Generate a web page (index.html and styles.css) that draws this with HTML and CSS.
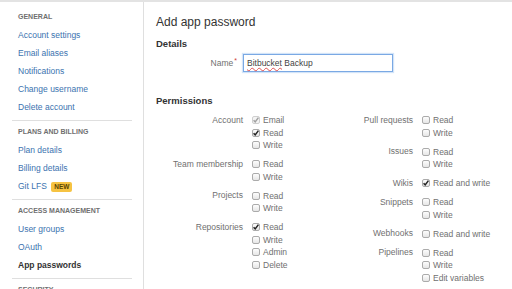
FILE: index.html
```html
<!DOCTYPE html>
<html>
<head>
    <title>Add app password</title>
    <link rel="stylesheet" href="styles.css">
</head>
<body>
<div class="page">
    <nav class="sidebar">
        <div class="nav-section">
            <h3 class="nav-heading">General</h3>
            <a class="nav-link" href="#">Account settings</a>
            <a class="nav-link" href="#">Email aliases</a>
            <a class="nav-link" href="#">Notifications</a>
            <a class="nav-link" href="#">Change username</a>
            <a class="nav-link" href="#">Delete account</a>
        </div>
        <div class="nav-section">
            <h3 class="nav-heading">Plans and billing</h3>
            <a class="nav-link" href="#">Plan details</a>
            <a class="nav-link" href="#">Billing details</a>
            <a class="nav-link" href="#">Git LFS <span class="badge">New</span></a>
        </div>
        <div class="nav-section">
            <h3 class="nav-heading">Access management</h3>
            <a class="nav-link" href="#">User groups</a>
            <a class="nav-link" href="#">OAuth</a>
            <a class="nav-link active" href="#">App passwords</a>
        </div>
        <div class="nav-section">
            <h3 class="nav-heading">Security</h3>
        </div>
    </nav>

    <main class="content">
        <h1 class="page-title">Add app password</h1>
        <h2 class="section-title">Details</h2>
        <div class="field-row">
            <label class="field-label">Name<span class="required">*</span></label>
            <div class="text-field"><span class="misspelled">Bitbucket</span> Backup</div>
        </div>

        <h2 class="section-title permissions-title">Permissions</h2>
        <div class="permissions">
            <div class="perm-column">
                <div class="perm-group">
                    <div class="perm-label">Account</div>
                    <div class="perm-options">
                        <div class="option"><span class="cb checked disabled"><svg viewBox="0 0 8 8"><path d="M1.6 4.2 L3.2 5.9 L6.4 1.6"/></svg></span>Email</div>
                        <div class="option"><span class="cb checked"><svg viewBox="0 0 8 8"><path d="M1.6 4.2 L3.2 5.9 L6.4 1.6"/></svg></span>Read</div>
                        <div class="option"><span class="cb"></span>Write</div>
                    </div>
                </div>
                <div class="perm-group">
                    <div class="perm-label">Team membership</div>
                    <div class="perm-options">
                        <div class="option"><span class="cb"></span>Read</div>
                        <div class="option"><span class="cb"></span>Write</div>
                    </div>
                </div>
                <div class="perm-group">
                    <div class="perm-label">Projects</div>
                    <div class="perm-options">
                        <div class="option"><span class="cb"></span>Read</div>
                        <div class="option"><span class="cb"></span>Write</div>
                    </div>
                </div>
                <div class="perm-group">
                    <div class="perm-label">Repositories</div>
                    <div class="perm-options">
                        <div class="option"><span class="cb checked"><svg viewBox="0 0 8 8"><path d="M1.6 4.2 L3.2 5.9 L6.4 1.6"/></svg></span>Read</div>
                        <div class="option"><span class="cb"></span>Write</div>
                        <div class="option"><span class="cb"></span>Admin</div>
                        <div class="option"><span class="cb"></span>Delete</div>
                    </div>
                </div>
            </div>

            <div class="perm-column">
                <div class="perm-group">
                    <div class="perm-label">Pull requests</div>
                    <div class="perm-options">
                        <div class="option"><span class="cb"></span>Read</div>
                        <div class="option"><span class="cb"></span>Write</div>
                    </div>
                </div>
                <div class="perm-group">
                    <div class="perm-label">Issues</div>
                    <div class="perm-options">
                        <div class="option"><span class="cb"></span>Read</div>
                        <div class="option"><span class="cb"></span>Write</div>
                    </div>
                </div>
                <div class="perm-group">
                    <div class="perm-label">Wikis</div>
                    <div class="perm-options">
                        <div class="option"><span class="cb checked"><svg viewBox="0 0 8 8"><path d="M1.6 4.2 L3.2 5.9 L6.4 1.6"/></svg></span>Read and write</div>
                    </div>
                </div>
                <div class="perm-group">
                    <div class="perm-label">Snippets</div>
                    <div class="perm-options">
                        <div class="option"><span class="cb"></span>Read</div>
                        <div class="option"><span class="cb"></span>Write</div>
                    </div>
                </div>
                <div class="perm-group">
                    <div class="perm-label">Webhooks</div>
                    <div class="perm-options">
                        <div class="option"><span class="cb"></span>Read and write</div>
                    </div>
                </div>
                <div class="perm-group">
                    <div class="perm-label">Pipelines</div>
                    <div class="perm-options">
                        <div class="option"><span class="cb"></span>Read</div>
                        <div class="option"><span class="cb"></span>Write</div>
                        <div class="option"><span class="cb"></span>Edit variables</div>
                    </div>
                </div>
            </div>
        </div>
    </main>
</div>
</body>
</html>
```

FILE: styles.css
```css
body {
    margin: 0;
    font-family: "Liberation Sans", Arial, sans-serif;
    font-size: 8.5px;
    color: #333;
    border-top: 2px solid #e3e3e3;
    overflow: hidden;
}

.page {
    display: flex;
    min-height: 287px;
}

/* sidebar */

.sidebar {
    box-sizing: border-box;
    width: 144px;
    padding: 4px 11px 0 12px;
    border-right: 1px solid #dfdfdf;
}

.nav-section {
    padding: 2px 0 4px;
    border-top: 1px solid #dfdfdf;
}

.nav-section:first-child {
    border-top: none;
}

.nav-heading {
    margin: 0;
    padding-left: 6px;
    font-size: 7px;
    font-weight: bold;
    line-height: 18px;
    text-transform: uppercase;
    color: #707070;
}

.nav-link {
    display: block;
    padding-left: 6px;
    line-height: 18px;
    color: #3b73af;
    text-decoration: none;
}

.nav-link.active {
    color: #333;
    font-weight: bold;
}

.badge {
    display: inline-block;
    margin-left: 2px;
    padding: 0 3px;
    height: 10px;
    line-height: 10px;
    border-radius: 2px;
    background-color: #f6c342;
    color: #594300;
    font-size: 6.5px;
    font-weight: bold;
    text-transform: uppercase;
}

/* main */

.content {
    flex: 1;
    padding: 12px 0 0 12px;
}

.page-title {
    margin: 0;
    font-size: 12px;
    font-weight: normal;
    line-height: 16px;
    color: #333;
}

.section-title {
    margin: 8px 0 0;
    font-size: 9.5px;
    font-weight: bold;
    line-height: 12px;
    color: #333;
}

.permissions-title {
    margin-top: 23px;
}

.field-row {
    display: flex;
    align-items: center;
    margin-top: 4px;
}

.field-label {
    box-sizing: border-box;
    width: 87px;
    padding-right: 6px;
    text-align: right;
    color: #707070;
}

.required {
    position: relative;
    top: -3px;
    margin-left: 1px;
    color: #d04437;
    font-size: 7px;
}

.text-field {
    box-sizing: border-box;
    width: 150px;
    height: 18px;
    padding-left: 3px;
    line-height: 16px;
    border: 1px solid #7aa9e4;
    box-shadow: 0 0 1px 1px #d3e4f8;
    color: #444;
}

.misspelled {
    text-decoration: underline wavy #e05050;
    text-decoration-thickness: 0.75px;
    text-underline-offset: 1px;
}

/* permissions grid */

.permissions {
    display: flex;
    margin-top: 6.75px;
}

.perm-column {
    width: 170px;
}

.perm-group {
    display: flex;
    margin-bottom: 6.5px;
}

.perm-label {
    width: 87px;
    text-align: right;
    line-height: 12.5px;
    color: #707070;
}

.perm-options {
    margin-left: 9px;
}

.option {
    display: flex;
    align-items: center;
    height: 12.5px;
    color: #707070;
}

.cb {
    box-sizing: border-box;
    display: flex;
    align-items: center;
    justify-content: center;
    width: 8px;
    height: 8px;
    margin-right: 3px;
    border: 1px solid #ababab;
    border-radius: 2px;
    background: linear-gradient(#fdfdfd, #e6e6e6);
}

.cb svg {
    width: 8px;
    height: 8px;
    flex: none;
}

.cb path {
    fill: none;
    stroke: #222;
    stroke-width: 1.5;
}

.cb.disabled {
    border-color: #cfcfcf;
    background: #f4f4f4;
}

.cb.disabled path {
    stroke: #a0a0a0;
}
```
